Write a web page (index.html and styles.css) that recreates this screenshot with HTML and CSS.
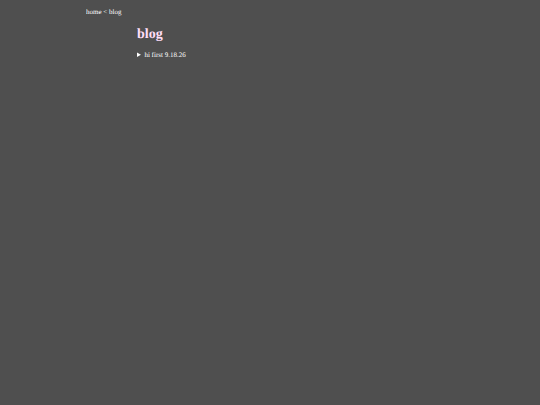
FILE: index.html
```html
<!DOCTYPE html>
<html lang="en">
<head>
    <meta charset="UTF-8">
    <meta name="viewport" content="width=device-width, initial-scale=1.0">
    <title>blog</title>
    <link rel="stylesheet" href="styles.css">
</head>
<body>
    <nav class="crumbs"><a href="index.html">home</a> &lt; blog</nav>

    <main class="content">
        <h1>blog</h1>

        <!-- posts -->
        <details>
            <summary>hi first 9.18.26</summary>
            <p>hi</p>
        </details>
    </main>
</body>
</html>
```

FILE: styles.css
```css
body {
    font-family: "Liberation Serif", "Times New Roman", serif;
    font-size: 7px;
    line-height: 8px;
    text-rendering: geometricPrecision;
    background-color: #4f4f4f;
    color: white;
    max-width: 368px;
    margin: 8px auto;
}
a {
    color: white;
    text-decoration: none;
}
.content {
    margin: 0 51px;
}
h1 {
    color: #ffdef8;
    font-size: 14px;
    line-height: 16px;
    margin: 11px 0 8px;
}
summary {
    cursor: pointer;
}
```
